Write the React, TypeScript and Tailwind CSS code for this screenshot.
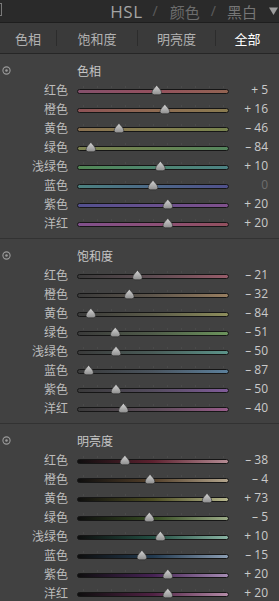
import React from 'react';

type Row = { label: string; value: number; stops: string[] };
type Section = { key: string; title: string; rows: Row[] };

const sections: Section[] = [
  {
    key: 'hue',
    title: '色相',
    rows: [
      { label: '红色', value: 5, stops: ['#84506c', '#94505e', '#926452'] },
      { label: '橙色', value: 16, stops: ['#8e5256', '#8e6a52', '#8a7c50'] },
      { label: '黄色', value: -46, stops: ['#8a7050', '#868050', '#78844e'] },
      { label: '绿色', value: -84, stops: ['#7e8250', '#6a8452', '#54865e'] },
      { label: '浅绿色', value: 10, stops: ['#528854', '#4e8670', '#4c8284'] },
      { label: '蓝色', value: 0, stops: ['#4c8280', '#4c6888', '#50508c'] },
      { label: '紫色', value: 20, stops: ['#52508e', '#68508e', '#80508c'] },
      { label: '洋红', value: 20, stops: ['#80508c', '#8c5078', '#92505e'] },
    ],
  },
  {
    key: 'sat',
    title: '饱和度',
    rows: [
      { label: '红色', value: -21, stops: ['#3a3a3a', '#5e4c52', '#985c6a'] },
      { label: '橙色', value: -32, stops: ['#3a3a3a', '#5e564c', '#987e60'] },
      { label: '黄色', value: -84, stops: ['#3a3a3a', '#5c5c4a', '#8e8e5c'] },
      { label: '绿色', value: -51, stops: ['#3a3a3a', '#505c4a', '#6c945c'] },
      { label: '浅绿色', value: -50, stops: ['#3a3a3a', '#4a5c58', '#5c948a'] },
      { label: '蓝色', value: -87, stops: ['#3a3a3a', '#4a545e', '#5c809c'] },
      { label: '紫色', value: -50, stops: ['#3a3a3a', '#544c5e', '#805c9a'] },
      { label: '洋红', value: -40, stops: ['#3a3a3a', '#5c4c58', '#985c8a'] },
    ],
  },
  {
    key: 'lum',
    title: '明亮度',
    rows: [
      { label: '红色', value: -38, stops: ['#0e0e0e', '#5e2230', '#b48c94'] },
      { label: '橙色', value: -4, stops: ['#0e0e0e', '#54402a', '#b4a68e'] },
      { label: '黄色', value: 73, stops: ['#0e0e0e', '#4e4e22', '#b8b88e'] },
      { label: '绿色', value: -5, stops: ['#0e0e0e', '#364c22', '#9cac88'] },
      { label: '浅绿色', value: 10, stops: ['#0e0e0e', '#224e42', '#8ab4a4'] },
      { label: '蓝色', value: -15, stops: ['#0e0e0e', '#223a50', '#8c9eb4'] },
      { label: '紫色', value: 20, stops: ['#0e0e0e', '#462254', '#a68cb4'] },
      { label: '洋红', value: 20, stops: ['#0e0e0e', '#502244', '#b48ca8'] },
    ],
  },
];

const cjk = "font-['Noto_Sans_CJK_SC','Noto_Sans',sans-serif]";

function formatValue(v: number) {
  if (v === 0) return '0';
  return v > 0 ? `+ ${v}` : `– ${Math.abs(v)}`;
}

function Slider({ id, value, stops }: { id: string; value: number; stops: string[] }) {
  const cx = 2 + ((value + 100) / 200) * 148;
  const ticks = Array.from({ length: 11 }, (_, i) => 6 + i * 14);
  return (
    <svg width="152" height="12" viewBox="0 0 152 12" className="block overflow-visible">
      <defs>
        <linearGradient id={`t-${id}`} x1="0" x2="1" y1="0" y2="0">
          <stop offset="0%" stopColor={stops[0]} />
          <stop offset="50%" stopColor={stops[1]} />
          <stop offset="100%" stopColor={stops[2]} />
        </linearGradient>
        <linearGradient id={`k-${id}`} x1="0" x2="0" y1="0" y2="1">
          <stop offset="0%" stopColor="#d6d6d6" />
          <stop offset="100%" stopColor="#8e8e8e" />
        </linearGradient>
      </defs>
      {ticks.map((x) => (
        <rect key={x} x={x} y="2" width="1" height="2" fill="#4a4a4a" />
      ))}
      <rect x="0.5" y="5.5" width="151" height="4" rx="2" fill={`url(#t-${id})`} stroke="#161616" strokeWidth="1" />
      <path
        d={`M ${cx} 1 C ${cx + 1} 3 ${cx + 4.8} 6 ${cx + 4.8} 8.5 Q ${cx + 4.8} 10.8 ${cx + 2.5} 10.8 L ${cx - 2.5} 10.8 Q ${cx - 4.8} 10.8 ${cx - 4.8} 8.5 C ${cx - 4.8} 6 ${cx - 1} 3 ${cx} 1 Z`}
        fill={`url(#k-${id})`}
        stroke="#2a2a2a"
        strokeWidth="0.6"
      />
    </svg>
  );
}

function TargetIcon() {
  return (
    <svg width="9" height="9" viewBox="0 0 9 9">
      <circle cx="4.5" cy="4.5" r="3.6" fill="none" stroke="#9a9a9a" strokeWidth="1.1" />
      <circle cx="4.5" cy="4.5" r="1.3" fill="#9a9a9a" />
    </svg>
  );
}

function SectionBlock({ section, last }: { section: Section; last: boolean }) {
  return (
    <div className={`pt-[7px] ${last ? '' : 'pb-[6px] border-b border-[#323232]'}`}>
      <div className="flex h-[19px] items-center">
        <div className="flex w-[13px] justify-center">
          <TargetIcon />
        </div>
        <div className={`pl-[64px] text-[12px] text-[#c6c6c6] ${cjk}`}>{section.title}</div>
      </div>
      {section.rows.map((row, i) => (
        <div key={row.label} className="flex h-[19px] items-center">
          <div className={`w-[68px] text-right text-[12px] leading-none text-[#bcbcbc] ${cjk}`}>{row.label}</div>
          <div className="ml-[9px] w-[152px]">
            <Slider id={`${section.key}-${i}`} value={row.value} stops={row.stops} />
          </div>
          <div
            className={`w-[39px] text-right text-[12px] leading-none font-['Open_Sans',sans-serif] ${
              row.value === 0 ? 'text-[#6e6e6e]' : 'text-[#cacaca]'
            }`}
          >
            {formatValue(row.value)}
          </div>
        </div>
      ))}
    </div>
  );
}

export default function App() {
  const tabs = [
    { label: '色相', w: 'w-[56px]', active: false },
    { label: '饱和度', w: 'w-[81px]', active: false },
    { label: '明亮度', w: 'w-[78px]', active: false },
    { label: '全部', w: 'flex-1', active: true },
  ];

  return (
    <div className="h-[601px] w-[279px] overflow-hidden bg-[#414141]">
      {/* panel header */}
      <div className="relative flex h-[22px] items-center justify-end bg-[#2a2a2a] pr-[1px]">
        <div className="absolute left-[-4px] top-[3px] h-[13px] w-[6px] border border-[#7a7a7a]" />
        <span className="text-[17px] leading-none tracking-[0.5px] text-[#a4a4a4] font-['Open_Sans',sans-serif]">HSL</span>
        <span className="ml-[10px] mr-[12px] text-[14px] leading-none text-[#5a5a5a]">/</span>
        <span className={`text-[15px] leading-none text-[#6c6c6c] ${cjk}`}>颜色</span>
        <span className="mx-[11px] text-[14px] leading-none text-[#5a5a5a]">/</span>
        <span className={`text-[15px] leading-none text-[#767676] ${cjk}`}>黑白</span>
        <svg width="9" height="8" viewBox="0 0 9 8" className="ml-[12px]">
          <path d="M0 0.5 L9 0.5 L4.5 8 Z" fill="#9c9c9c" />
        </svg>
      </div>
      <div className="h-[1px] bg-[#1e1e1e]" />
      {/* tabs */}
      <div className="flex h-[30px] items-center bg-[#3a3a3a]">
        {tabs.map((t, i) => (
          <div
            key={t.label}
            className={`flex h-[16px] items-center justify-center ${t.w} ${
              i > 0 ? 'border-l border-[#2c2c2c]' : ''
            } text-[13px] leading-none ${cjk} ${t.active ? 'text-white' : 'text-[#b2b2b2]'}`}
          >
            {t.label}
          </div>
        ))}
      </div>
      <div className="h-[1px] bg-[#262626]" />
      {sections.map((s, i) => (
        <SectionBlock key={s.key} section={s} last={i === sections.length - 1} />
      ))}
    </div>
  );
}
